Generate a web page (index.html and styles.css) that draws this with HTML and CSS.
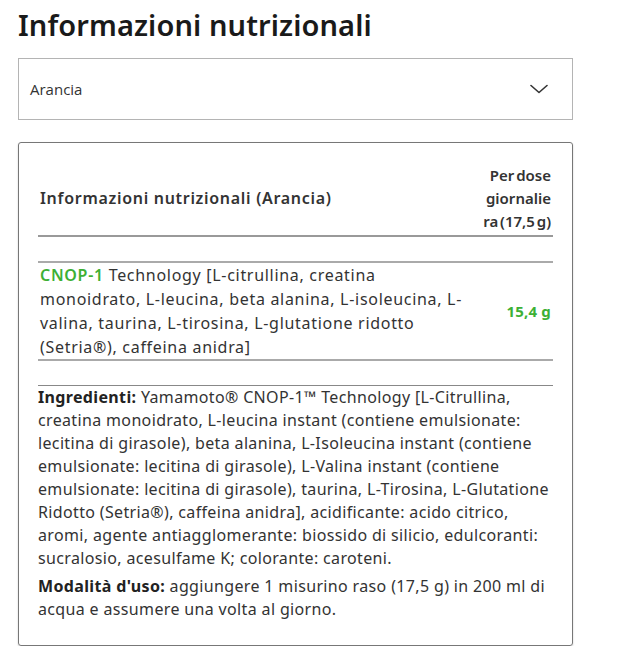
FILE: index.html
```html
<!DOCTYPE html>
<html lang="it">
<head>
<meta charset="utf-8">
<title>Informazioni nutrizionali</title>
<link rel="stylesheet" href="styles.css">
</head>
<body>
<main class="page">
  <h2 class="title">Informazioni nutrizionali</h2>
  <div class="select">
    <span class="select-value">Arancia</span>
    <svg class="chevron" width="18" height="10" viewBox="0 0 18 10" aria-hidden="true"><path d="M1 1.5 L9 8.5 L17 1.5" fill="none" stroke="#333" stroke-width="1.6" stroke-linecap="round" stroke-linejoin="round"/></svg>
  </div>
  <section class="card">
    <table class="nutri">
      <thead>
        <tr>
          <th class="col-name">Informazioni nutrizionali (Arancia)</th>
          <th class="col-dose">Per dose giornaliera (17,5 g)</th>
        </tr>
      </thead>
      <tbody>
        <tr class="spacer"><td colspan="2"></td></tr>
        <tr class="item">
          <td class="col-name"><span class="green">CNOP-1</span> Technology [L-citrullina, creatina monoidrato, L-leucina, beta alanina, L-isoleucina, L-valina, taurina, L-tirosina, L-glutatione ridotto (Setria®), caffeina anidra]</td>
          <td class="col-dose value">15,4 g</td>
        </tr>
      </tbody>
    </table>
    <div class="info">
      <p><strong>Ingredienti:</strong> Yamamoto® CNOP-1™ Technology [L-Citrullina, creatina monoidrato, L-leucina instant (contiene emulsionate: lecitina di girasole), beta alanina, L-Isoleucina instant (contiene emulsionate: lecitina di girasole), L-Valina instant (contiene emulsionate: lecitina di girasole), taurina, L-Tirosina, L-Glutatione Ridotto (Setria®), caffeina anidra], acidificante: acido citrico, aromi, agente antiagglomerante: biossido di silicio, edulcoranti: sucralosio, acesulfame K; colorante: caroteni.</p>
      <p><strong>Modalità d'uso:</strong> aggiungere 1 misurino raso (17,5 g) in 200 ml di acqua e assumere una volta al giorno.</p>
    </div>
  </section>
</main>
</body>
</html>
```

FILE: styles.css
```css
html, body {
  margin: 0;
  padding: 0;
  background: #fff;
}

body {
  font-family: "Noto Sans", "Open Sans", sans-serif;
  color: #333;
}

.page {
  width: 555px;
  margin-left: 18px;
  padding-top: 6px;
}

.title {
  margin: 0;
  font-size: 29px;
  line-height: 38px;
  font-weight: 600;
  color: #1a1a1a;
  letter-spacing: 0.1px;
}

.select {
  margin-top: 14px;
  height: 60px;
  border: 1px solid #b4b4b4;
  display: flex;
  align-items: center;
  justify-content: space-between;
  padding: 0 24px 0 11px;
}

.select-value {
  font-family: "Open Sans", "Noto Sans", sans-serif;
  font-size: 15px;
  color: #333;
}

.chevron {
  display: block;
}

.card {
  margin-top: 22px;
  border: 1px solid #777;
  border-radius: 3px;
  box-shadow: 0 1px 2px rgba(0, 0, 0, 0.2);
  padding: 20px 19px 24px 19px;
  height: 458px;
}

.nutri {
  width: 100%;
  border-collapse: collapse;
  font-size: 16px;
  letter-spacing: 0.7px;
  line-height: 23px;
}

.nutri th {
  font-weight: 600;
  vertical-align: middle;
  padding: 1px 2px 2px;
}

.nutri th.col-name {
  text-align: left;
  border-bottom: 2px solid #999;
}

.nutri th.col-dose {
  text-align: right;
  width: 68px;
  padding-left: 6px;
  font-size: 15px;
  letter-spacing: 0;
  word-spacing: -2px;
  overflow-wrap: anywhere;
  border-bottom: 2px solid #999;
}

.spacer td {
  height: 24px;
  padding: 0;
}

.item td {
  border-top: 2px solid #aaa;
  border-bottom: 2px solid #aaa;
  padding: 0 2px 0;
  line-height: 24px;
  vertical-align: middle;
}

.value {
  text-align: right;
  font-weight: 700;
  color: #3db035;
  font-size: 15px;
  letter-spacing: 0.2px;
  padding-right: 3px;
}

.green {
  color: #3db035;
  font-weight: 600;
}

.info {
  margin-top: 24px;
  border-top: 1px solid #888;
  padding-top: 0;
  font-size: 16px;
  letter-spacing: 0.35px;
  line-height: 23px;
}

.info p {
  margin: 0 0 5px;
}

.info strong {
  font-weight: 700;
  color: #222;
}
```
